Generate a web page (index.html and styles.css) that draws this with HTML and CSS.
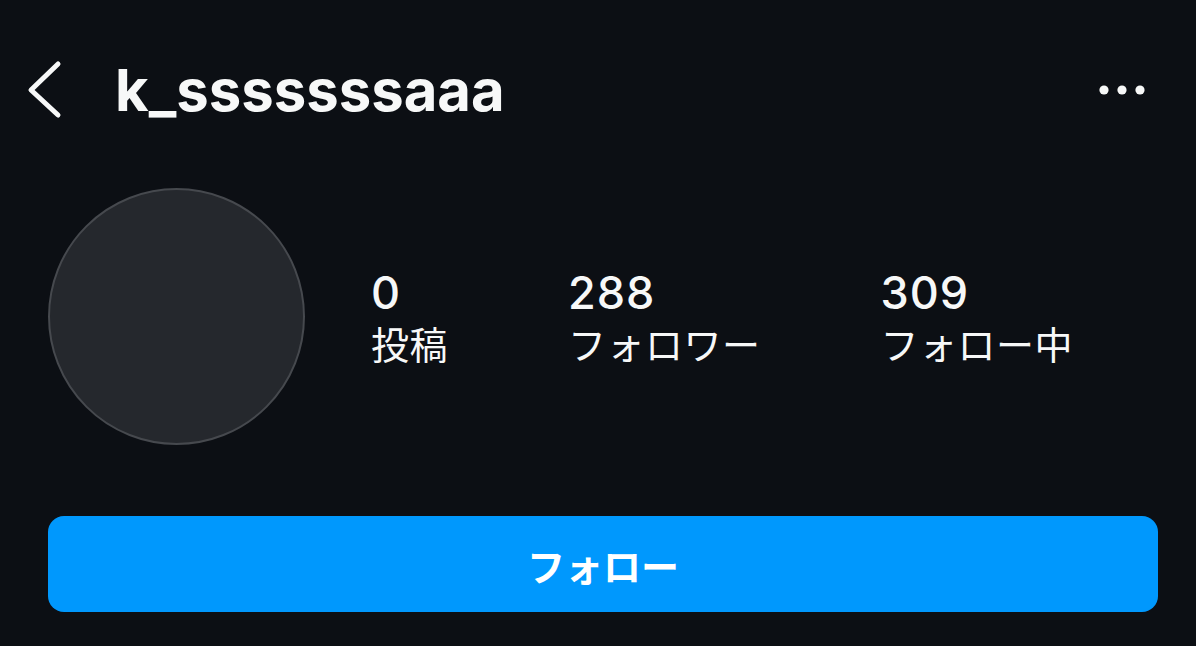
FILE: index.html
```html
<!DOCTYPE html>
<html lang="ja">
<head>
    <meta charset="UTF-8">
    <meta name="viewport" content="width=device-width, initial-scale=1.0">
    <title>k_sssssssaaa</title>
    <link rel="stylesheet" href="styles.css">
</head>
<body>
    <div class="screen">
        <div class="header">
            <button class="back-button" aria-label="戻る">
                <svg width="40" height="60" viewBox="0 0 40 60">
                    <polyline points="34,4 7,30 34,55" fill="none" stroke="#f7f8f8" stroke-width="5" stroke-linecap="round" stroke-linejoin="round"/>
                </svg>
            </button>
            <h1 class="username">k_sssssssaaa</h1>
            <button class="more-button" aria-label="その他">
                <svg width="46" height="12" viewBox="0 0 46 12">
                    <circle cx="5" cy="6" r="4.6" fill="#f7f8f8"/>
                    <circle cx="23" cy="6" r="4.6" fill="#f7f8f8"/>
                    <circle cx="41" cy="6" r="4.6" fill="#f7f8f8"/>
                </svg>
            </button>
        </div>

        <div class="profile">
            <div class="avatar"></div>
            <div class="stats">
                <div class="stat">
                    <div class="stat-num">0</div>
                    <div class="stat-label">投稿</div>
                </div>
                <div class="stat">
                    <div class="stat-num">288</div>
                    <div class="stat-label">フォロワー</div>
                </div>
                <div class="stat">
                    <div class="stat-num">309</div>
                    <div class="stat-label">フォロー中</div>
                </div>
            </div>
        </div>

        <div class="actions">
            <button class="follow-btn">フォロー</button>
        </div>
    </div>
</body>
</html>
```

FILE: styles.css
```css
* {
    margin: 0;
    padding: 0;
    box-sizing: border-box;
    font-family: "Inter", "Noto Sans CJK JP", sans-serif;
}

body {
    background-color: #0c0f14;
    color: #f7f8f8;
    width: 1196px;
    height: 646px;
    overflow: hidden;
}

.header {
    height: 180px;
    display: flex;
    align-items: center;
    padding: 0 51px 0 24px;
}

.back-button,
.more-button {
    background: none;
    border: none;
    display: flex;
    cursor: pointer;
}

.username {
    flex: 1;
    margin-left: 51px;
    font-size: 58px;
    font-weight: 700;
    line-height: 1;
}

.profile {
    display: flex;
    align-items: center;
    padding: 8px 38px 0 48px;
}

.avatar {
    width: 257px;
    height: 257px;
    border-radius: 50%;
    background-color: #25282d;
    border: 2px solid #46494e;
}

.stats {
    display: flex;
    gap: 120px;
    margin-left: 66px;
}

.stat-num {
    font-size: 45px;
    font-weight: 500;
    line-height: 52px;
    letter-spacing: 1px;
}

.stat-label {
    font-size: 38px;
    line-height: 48px;
    letter-spacing: 0.5px;
    font-family: "Noto Sans CJK JP", sans-serif;
}

.actions {
    padding: 71px 38px 0 48px;
}

.follow-btn {
    display: block;
    width: 100%;
    height: 96px;
    border: none;
    border-radius: 16px;
    background-color: #0098fd;
    color: #ffffff;
    font-family: "Noto Sans CJK JP", sans-serif;
    font-size: 38px;
    font-weight: 700;
    cursor: pointer;
}
```
